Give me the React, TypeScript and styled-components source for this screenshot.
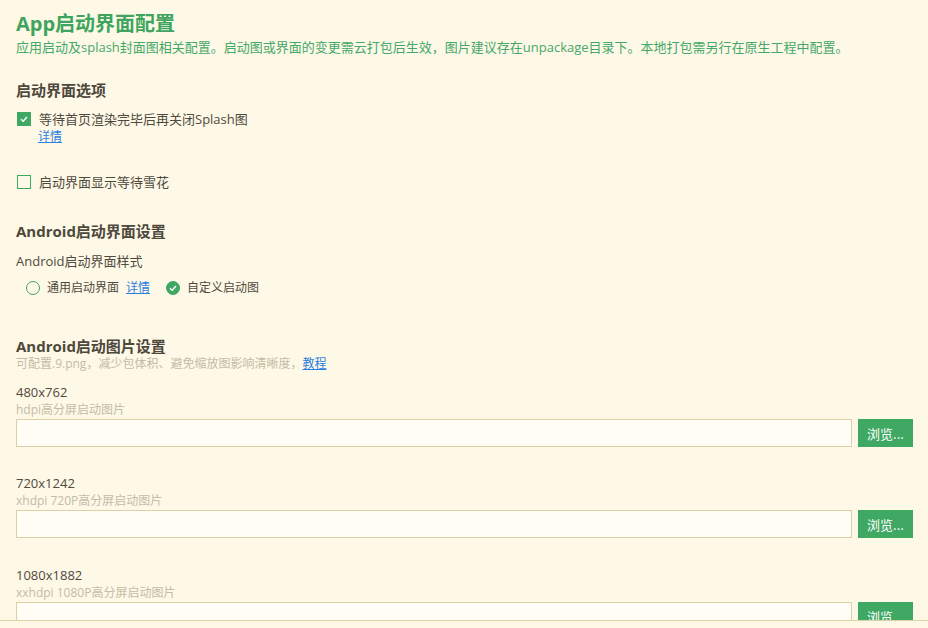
import styled, { createGlobalStyle } from 'styled-components';

const GlobalStyle = createGlobalStyle`
  html, body {
    margin: 0;
    padding: 0;
    background: #fef8e6;
  }
  body {
    font-family: "Open Sans", "Noto Sans CJK SC", sans-serif;
  }
`;

const green = '#3fa863';

const Page = styled.div`
  height: 621px;
  overflow: hidden;
  border-bottom: 1px solid #ddd0a6;
  padding: 10px 15px 0 16px;
  box-sizing: border-box;
  color: #4f4a3f;
`;

const Title = styled.h1`
  margin: 0;
  font-size: 20px;
  line-height: 28px;
  font-weight: 700;
  color: #3da55f;
`;

const Subtitle = styled.div`
  font-size: 13px;
  line-height: 18px;
  color: #45a86a;
`;

const Heading = styled.div<{ $top: number }>`
  margin-top: ${(p) => p.$top}px;
  font-size: 15px;
  line-height: 20px;
  font-weight: 700;
  color: #4d483c;
`;

const CheckRow = styled.label<{ $top: number }>`
  display: flex;
  align-items: center;
  gap: 8px;
  margin-top: ${(p) => p.$top}px;
  font-size: 13px;
  line-height: 18px;
  padding-left: 1px;
`;

const Box = styled.span<{ $checked?: boolean }>`
  width: 14px;
  height: 14px;
  box-sizing: border-box;
  display: inline-flex;
  align-items: center;
  justify-content: center;
  border: 1.5px solid ${green};
  background: ${(p) => (p.$checked ? green : 'transparent')};
`;

const Link = styled.a`
  color: #2b7fe0;
  text-decoration: underline;
  cursor: pointer;
`;

const SubLink = styled(Link)`
  display: block;
  margin: 1px 0 0 22px;
  font-size: 12px;
  line-height: 16px;
`;

const Label = styled.div<{ $top: number }>`
  margin-top: ${(p) => p.$top}px;
  font-size: 13px;
  line-height: 18px;
`;

const RadioRow = styled.div`
  display: flex;
  align-items: center;
  margin-top: 8px;
  padding-left: 10px;
  font-size: 12px;
  line-height: 20px;
`;

const RadioItem = styled.label`
  display: flex;
  align-items: center;
  gap: 7px;
  margin-right: 7px;
`;

const Circle = styled.span<{ $checked?: boolean }>`
  width: 14px;
  height: 14px;
  box-sizing: border-box;
  border-radius: 50%;
  display: inline-flex;
  align-items: center;
  justify-content: center;
  border: 1.5px solid ${green};
  background: ${(p) => (p.$checked ? green : 'transparent')};
`;

const RadioLink = styled(Link)`
  margin-right: 16px;
`;

const Hint = styled.div<{ $top?: number }>`
  margin-top: ${(p) => p.$top ?? 0}px;
  font-size: 12px;
  line-height: 16px;
  color: #c3bca6;
`;

const Size = styled.div<{ $top: number }>`
  margin-top: ${(p) => p.$top}px;
  font-size: 13px;
  line-height: 18px;
  color: #4f4a3f;
`;

const FileRow = styled.div`
  display: flex;
  gap: 6px;
  margin-top: 1px;
`;

const Input = styled.input`
  flex: 1;
  height: 28px;
  box-sizing: border-box;
  border: 1px solid #ddd0a6;
  background: #fffdf5;
  outline: none;
  font-size: 13px;
`;

const Browse = styled.button`
  width: 55px;
  height: 28px;
  border: none;
  background: ${green};
  color: #fff;
  font-size: 13px;
  font-family: "Noto Sans CJK SC", sans-serif;
  padding: 0;
  cursor: pointer;
`;

const Check = () => (
  <svg width="10" height="10" viewBox="0 0 10 10">
    <path d="M2 5.2 L4.2 7.2 L8 3" fill="none" stroke="#fff" strokeWidth="1.5" />
  </svg>
);

const images = [
  { size: '480x762', hint: 'hdpi高分屏启动图片', top: 11 },
  { size: '720x1242', hint: 'xhdpi 720P高分屏启动图片', top: 27 },
  { size: '1080x1882', hint: 'xxhdpi 1080P高分屏启动图片', top: 28 },
];

export default function App() {
  return (
    <>
      <GlobalStyle />
      <Page>
        <Title>App启动界面配置</Title>
        <Subtitle>
          应用启动及splash封面图相关配置。启动图或界面的变更需云打包后生效，图片建议存在unpackage目录下。本地打包需另行在原生工程中配置。
        </Subtitle>

        <Heading $top={24}>启动界面选项</Heading>
        <CheckRow $top={10}>
          <Box $checked>
            <Check />
          </Box>
          等待首页渲染完毕后再关闭Splash图
        </CheckRow>
        <SubLink>详情</SubLink>
        <CheckRow $top={28}>
          <Box />
          启动界面显示等待雪花
        </CheckRow>

        <Heading $top={30}>Android启动界面设置</Heading>
        <Label $top={11}>Android启动界面样式</Label>
        <RadioRow>
          <RadioItem>
            <Circle />
            通用启动界面
          </RadioItem>
          <RadioLink>详情</RadioLink>
          <RadioItem>
            <Circle $checked>
              <Check />
            </Circle>
            自定义启动图
          </RadioItem>
        </RadioRow>

        <Heading $top={38}>Android启动图片设置</Heading>
        <Hint>
          可配置.9.png，减少包体积、避免缩放图影响清晰度，<Link>教程</Link>
        </Hint>

        {images.map((img) => (
          <div key={img.size}>
            <Size $top={img.top}>{img.size}</Size>
            <Hint $top={1}>{img.hint}</Hint>
            <FileRow>
              <Input />
              <Browse>浏览...</Browse>
            </FileRow>
          </div>
        ))}
      </Page>
    </>
  );
}
